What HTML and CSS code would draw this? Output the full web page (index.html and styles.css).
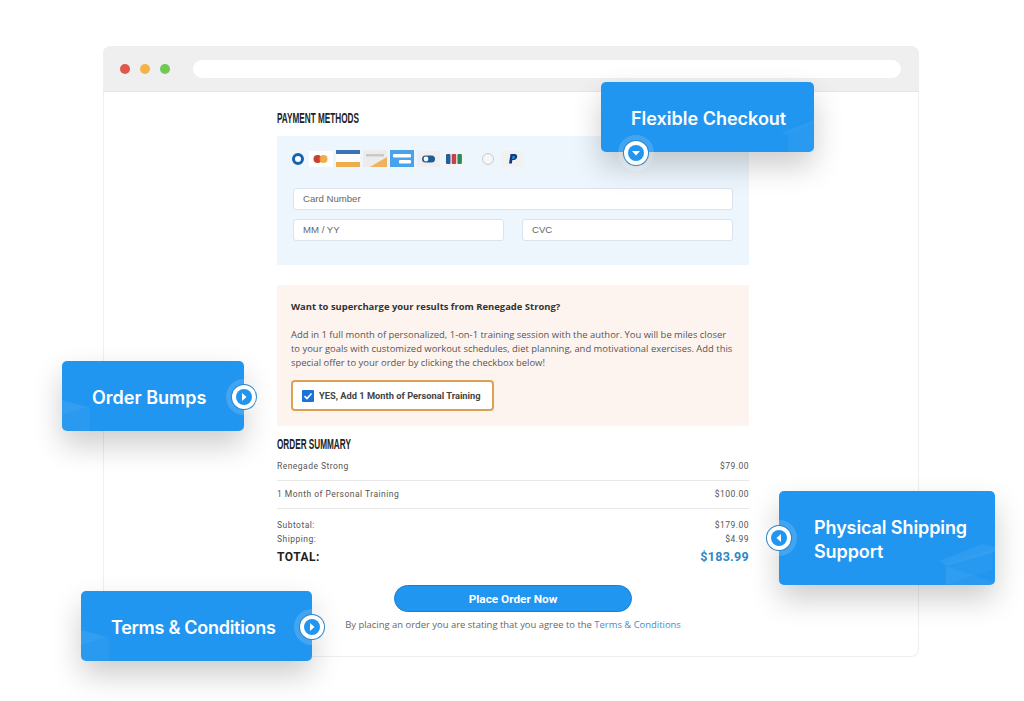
FILE: index.html
```html
<!DOCTYPE html>
<html lang="en">
<head>
  <meta charset="UTF-8">
  <meta name="viewport" content="width=device-width, initial-scale=1.0">
  <title>Checkout Features</title>
  <link rel="stylesheet" href="styles.css">
</head>
<body>
  <div class="stage">
    <div class="window">
      <div class="window-bar">
        <span class="dot dot-red"></span>
        <span class="dot dot-yellow"></span>
        <span class="dot dot-green"></span>
        <div class="address-bar"></div>
      </div>

      <div class="checkout">
        <h2 class="section-title">Payment Methods</h2>
        <div class="payment-box">
          <div class="method-row">
            <span class="radio radio-on"></span>
            <svg class="card card-first" width="24" height="16" viewBox="0 0 24 16"><rect width="24" height="16" fill="#fff"/><circle cx="8.5" cy="8" r="4" fill="#c8402f"/><circle cx="14.5" cy="8" r="4" fill="#f0a33c" opacity=".9"/></svg>
            <svg class="card" width="24" height="17" viewBox="0 0 24 17"><rect width="24" height="17" fill="#fdfdfd"/><rect width="24" height="4" fill="#3b73b5"/><rect y="12" width="24" height="5" fill="#efac4d"/></svg>
            <svg class="card" width="24" height="17" viewBox="0 0 24 17"><rect width="24" height="17" fill="#ececec"/><rect x="3" y="4" width="18" height="2.5" fill="#c9c9c9"/><path d="M7 17 L24 7 V17 Z" fill="#f0b25e"/></svg>
            <svg class="card" width="24" height="17" viewBox="0 0 24 17"><rect width="24" height="17" fill="#4aa3ea"/><rect x="3" y="4" width="18" height="3.5" rx="1" fill="#fff"/><rect x="9" y="10" width="12" height="3.5" rx="1" fill="#fff"/></svg>
            <svg class="card" width="23" height="16" viewBox="0 0 23 16"><rect width="23" height="16" fill="#efefef"/><rect x="5" y="4.5" width="13" height="7" rx="3.5" fill="#1d5c94"/><circle cx="9" cy="8" r="2.4" fill="#fff"/></svg>
            <svg class="card" width="22" height="16" viewBox="0 0 22 16"><rect width="22" height="16" fill="#f4f4f4"/><rect x="3" y="3" width="4.5" height="10" rx="1" fill="#25609c"/><rect x="8.7" y="3" width="4.5" height="10" rx="1" fill="#c7404a"/><rect x="14.4" y="3" width="4.5" height="10" rx="1" fill="#2f8a5a"/></svg>
            <span class="radio radio-off"></span>
            <svg class="card" width="22" height="16" viewBox="0 0 22 16"><rect width="22" height="16" fill="#f1f1f1"/><path d="M8.5 3 H12.5 C15 3 15.5 5 15 6.5 C14.4 8.4 13 9 11 9 H10.4 L9.8 12.5 H7 Z" fill="#123a83"/><path d="M10.5 5 H13 L12.4 8 H10 Z" fill="#2a8ad0"/></svg>
          </div>
          <div class="field field-wide">Card Number</div>
          <div class="field-row">
            <div class="field">MM / YY</div>
            <div class="field">CVC</div>
          </div>
        </div>

        <div class="offer-box">
          <h3 class="offer-title">Want to supercharge your results from Renegade Strong?</h3>
          <p class="offer-text">Add in 1 full month of personalized, 1-on-1 training session with the author. You will be miles closer to your goals with customized workout schedules, diet planning, and motivational exercises. Add this special offer to your order by clicking the checkbox below!</p>
          <label class="offer-check">
            <span class="checkbox">
              <svg width="12" height="12" viewBox="0 0 12 12"><path d="M2.5 6.2 L5 8.6 L9.5 3.4" fill="none" stroke="#fff" stroke-width="1.6"/></svg>
            </span>
            YES, Add 1 Month of Personal Training
          </label>
        </div>

        <h2 class="section-title summary-title">Order Summary</h2>
        <div class="summary-row line-item"><span>Renegade Strong</span><span>$79.00</span></div>
        <div class="summary-row line-item"><span>1 Month of Personal Training</span><span>$100.00</span></div>
        <div class="summary-row sub-row first-sub"><span>Subtotal:</span><span>$179.00</span></div>
        <div class="summary-row sub-row"><span>Shipping:</span><span>$4.99</span></div>
        <div class="summary-row total-row"><span>TOTAL:</span><span class="total-value">$183.99</span></div>

        <button class="order-button">Place Order Now</button>
        <p class="terms-text">By placing an order you are stating that you agree to the <a href="#">Terms &amp; Conditions</a></p>
      </div>
    </div>

    <div class="callout callout-flexible">
      <svg class="mark mark-right" width="34" height="34" viewBox="0 0 34 34"><path d="M8 17 L34 6 V34 H8 Z" fill="#fff" opacity=".04"/><path d="M1 15 L34 2 V6 L8 17 Z" fill="#fff" opacity=".05"/></svg>
      <span>Flexible Checkout</span>
      <span class="hotspot hotspot-bottom"><svg width="8" height="6" viewBox="0 0 8 6"><path d="M0 1 H8 L4 5.5 Z" fill="#fff"/></svg></span>
    </div>

    <div class="callout callout-bumps">
      <svg class="mark mark-left" width="28" height="31" viewBox="0 0 28 31"><path d="M0 0 L26 7 L0 15 Z" fill="#fff" opacity=".08"/><path d="M0 15 L26 7 L28 8 V31 H0 Z" fill="#fff" opacity=".04"/></svg>
      <span>Order Bumps</span>
      <span class="hotspot hotspot-right"><svg width="6" height="8" viewBox="0 0 6 8"><path d="M1 0 V8 L5.5 4 Z" fill="#fff"/></svg></span>
    </div>

    <div class="callout callout-shipping">
      <svg class="mark mark-right" width="56" height="41" viewBox="0 0 56 41"><path d="M7 20 L53 5 V26 L7 41 Z" fill="#fff" opacity=".03"/><path d="M7 22 L54 38 V41 H7 Z" fill="#fff" opacity=".04"/><path d="M0 17 L44 0 L56 3 V8 L7 22 Z" fill="#fff" opacity=".06"/></svg>
      <span>Physical Shipping<br>Support</span>
      <span class="hotspot hotspot-left"><svg width="6" height="8" viewBox="0 0 6 8"><path d="M5 0 V8 L0.5 4 Z" fill="#fff"/></svg></span>
    </div>

    <div class="callout callout-terms">
      <svg class="mark mark-left" width="28" height="31" viewBox="0 0 28 31"><path d="M0 0 L26 7 L0 15 Z" fill="#fff" opacity=".08"/><path d="M0 15 L26 7 L28 8 V31 H0 Z" fill="#fff" opacity=".04"/></svg>
      <span>Terms &amp; Conditions</span>
      <span class="hotspot hotspot-right"><svg width="6" height="8" viewBox="0 0 6 8"><path d="M1 0 V8 L5.5 4 Z" fill="#fff"/></svg></span>
    </div>
  </div>
</body>
</html>
```

FILE: styles.css
```css
html, body {
  margin: 0;
  padding: 0;
  background-color: #fff;
  overflow: hidden;
}

.stage {
  position: relative;
  width: 1024px;
  height: 701px;
  padding: 46px 0 0 103px;
  box-sizing: border-box;
  font-family: 'Open Sans', sans-serif;
  color: #333;
}

/* Browser frame */
.window {
  width: 816px;
  height: 611px;
  box-sizing: border-box;
  border: 1px solid #efefef;
  border-top: none;
  border-radius: 8px;
}

.window-bar {
  display: flex;
  align-items: center;
  height: 46px;
  box-sizing: border-box;
  margin: 0 -1px;
  padding: 0 18px 0 17px;
  background-color: #efefef;
  border-bottom: 1px solid #e6e6e6;
  border-radius: 8px 8px 0 0;
}

.dot {
  width: 10px;
  height: 10px;
  border-radius: 50%;
  margin-right: 10px;
}

.dot-red { background-color: #e2574c; }
.dot-yellow { background-color: #f4b448; }
.dot-green { background-color: #71c855; }

.address-bar {
  flex-grow: 1;
  height: 18px;
  margin-left: 13px;
  background-color: #fff;
  border-radius: 9px;
}

/* Checkout column */
.checkout {
  width: 472px;
  margin-left: 173px;
  padding-top: 18px;
}

/* no condensed face installed, so squeeze the caps */
.section-title {
  margin: 0;
  height: 17px;
  font-family: 'Liberation Sans', sans-serif;
  font-size: 14px;
  line-height: 17px;
  font-weight: 700;
  text-transform: uppercase;
  color: #222;
  transform: scaleX(0.585);
  transform-origin: left center;
}

.payment-box {
  height: 129px;
  margin-top: 9px;
  padding: 14px 16px 0;
  box-sizing: border-box;
  background-color: #edf6fd;
}

.method-row {
  display: flex;
  align-items: center;
  height: 17px;
  margin-bottom: 21px;
}

.card {
  margin-right: 3px;
  flex-shrink: 0;
}

.card-first { margin-left: 5px; }

.radio {
  width: 12px;
  height: 12px;
  box-sizing: border-box;
  border-radius: 50%;
  flex-shrink: 0;
}

.radio-on {
  margin-left: -1px;
  border: 3px solid #1565ae;
  background-color: #fff;
}

.radio-off {
  margin: 0 8px 0 14px;
  border: 1px solid #ccc;
  background-color: #f6f6f6;
}

.field {
  flex: 1;
  height: 22px;
  padding-left: 9px;
  box-sizing: border-box;
  background-color: #fff;
  border: 1px solid #dbe4ec;
  border-radius: 3px;
  font-family: 'Liberation Sans', sans-serif;
  font-size: 9.6px;
  line-height: 20px;
  color: #666;
}

.field-wide { width: 440px; }

.field-row {
  display: flex;
  gap: 18px;
  width: 440px;
  margin-top: 9px;
}

.offer-box {
  height: 141px;
  margin-top: 20px;
  padding: 15px 14px 0;
  box-sizing: border-box;
  background-color: #fdf4ef;
}

.offer-title {
  margin: 0;
  font-size: 9.44px;
  line-height: 14px;
  font-weight: 700;
  color: #333;
}

.offer-text {
  margin: 14px 0 0;
  font-size: 9.44px;
  line-height: 14px;
  color: #555;
}

.offer-check {
  display: flex;
  align-items: center;
  width: 203px;
  height: 31px;
  margin-top: 10px;
  padding-left: 9px;
  box-sizing: border-box;
  background-color: #fff;
  border: 2px solid #dca155;
  border-radius: 4px;
  font-family: Roboto, sans-serif;
  font-size: 9.3px;
  font-weight: 700;
  white-space: nowrap;
  color: #444;
}

.checkbox {
  display: flex;
  align-items: center;
  justify-content: center;
  width: 12px;
  height: 12px;
  margin-right: 5px;
  background-color: #1a73d8;
  border-radius: 1px;
}

.summary-title { margin-top: 10px; }

.summary-row {
  display: flex;
  justify-content: space-between;
  font-family: Roboto, sans-serif;
  font-size: 8.5px;
  letter-spacing: 0.47px;
  color: #555;
}

.line-item {
  height: 28px;
  line-height: 27px;
  box-sizing: border-box;
  border-bottom: 1px solid #e8e8e8;
}

.sub-row {
  height: 14px;
  line-height: 14px;
}

.first-sub { margin-top: 9px; }

.total-row {
  margin-top: 1px;
  height: 22px;
  line-height: 20px;
  font-size: 12px;
  font-weight: 700;
  letter-spacing: 0.5px;
  color: #222;
}

.total-value {
  font-size: 12.5px;
  letter-spacing: 0.3px;
  color: #2f87c5;
}

.order-button {
  display: block;
  width: 238px;
  height: 27px;
  margin: 16px auto 0;
  background-color: #2196f0;
  color: #fff;
  border: 1px solid #1b7fcc;
  border-radius: 14px;
  font-family: Roboto, sans-serif;
  font-size: 11.8px;
  font-weight: 700;
  cursor: pointer;
}

.terms-text {
  margin: 5px 0 0;
  text-align: center;
  font-size: 9.44px;
  line-height: 16px;
  color: #666;
}

.terms-text a {
  color: #3f8cc5;
  text-decoration: none;
}

/* Feature callouts */
.callout {
  position: absolute;
  display: flex;
  align-items: center;
  box-sizing: border-box;
  padding-top: 3px;
  background-color: #2196f0;
  border-radius: 5px;
  box-shadow: 0 14px 30px rgba(0,0,0,0.2);
  font-family: Inter, sans-serif;
  font-size: 18px;
  line-height: 24px;
  font-weight: 600;
  color: #fff;
}

.callout-flexible { left: 601px; top: 82px; width: 213px; height: 70px; padding-left: 30px; }
.callout-bumps { left: 62px; top: 361px; width: 182px; height: 70px; padding-left: 30px; }
.callout-shipping { left: 779px; top: 491px; width: 216px; height: 94px; padding-left: 35px; letter-spacing: -0.1px; }
.callout-terms { left: 81px; top: 591px; width: 231px; height: 70px; padding-left: 30px; letter-spacing: -0.28px; }

.mark {
  position: absolute;
  bottom: 0;
}

.mark-left { left: 0; border-bottom-left-radius: 5px; }
.mark-right { right: 0; border-bottom-right-radius: 5px; }

.hotspot {
  position: absolute;
  display: flex;
  align-items: center;
  justify-content: center;
  width: 16px;
  height: 16px;
  background-color: #2196f0;
  border-radius: 50%;
  box-shadow: 0 0 0 4px #fff, 0 0 0 5px #2a86cc, 0 0 0 10px rgba(255,255,255,0.15);
}

.hotspot-bottom { left: 27px; bottom: -9px; }
.hotspot-right { right: -8px; top: 28px; }
.hotspot-left { left: -8px; top: 39px; }
```
